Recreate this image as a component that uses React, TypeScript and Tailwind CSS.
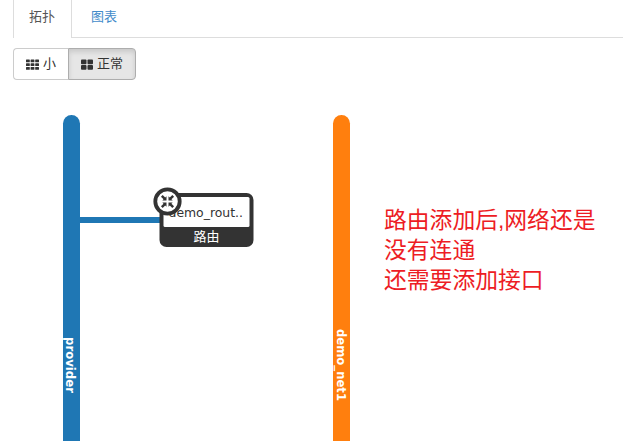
function SmallGrid() {
  return (
    <svg className="h-[11px] w-[13px] shrink-0" viewBox="0 0 13 11" fill="#333">
      {[0, 4.6, 9.2].map((x) =>
        [0.5, 4.2, 7.9].map((y) => <rect key={`${x}-${y}`} x={x} y={y} width="3.8" height="2.8" rx="0.5" />)
      )}
    </svg>
  );
}

function LargeGrid() {
  return (
    <svg className="h-[11px] w-[12px] shrink-0" viewBox="0 0 12 11" fill="#333">
      {[0, 6.5].map((x) =>
        [0.5, 6].map((y) => <rect key={`${x}-${y}`} x={x} y={y} width="5.5" height="4.7" rx="0.9" />)
      )}
    </svg>
  );
}

function Tabs() {
  return (
    <nav className="flex h-[38px] pl-[13px] text-[13px] leading-[34px]">
      <div className="w-[59px] border-x border-[#ddd] pl-[15px] text-[#555]">拓扑</div>
      <div className="flex-1 border-b border-[#ddd] pl-[19px] text-[#428bca]">图表</div>
    </nav>
  );
}

function SizeToggle() {
  return (
    <div className="mt-[10px] ml-[13px] flex h-8 w-[123px] text-[13px] text-[#333]">
      <button className="flex w-[55px] items-center gap-1 rounded-l-[4px] border border-r-0 border-[#ccc] bg-white pl-3">
        <SmallGrid />
        <span>小</span>
      </button>
      <button className="flex w-[68px] items-center gap-1 rounded-r-[4px] border border-[#adadad] bg-[#e6e6e6] pl-3 shadow-[inset_0_3px_5px_rgba(0,0,0,0.125)]">
        <LargeGrid />
        <span>正常</span>
      </button>
    </div>
  );
}

function Topology() {
  return (
    <svg className="absolute inset-0" width="623" height="441" viewBox="0 0 623 441">
      <rect x="63" y="115" width="17" height="360" rx="8.5" fill="#1f77b4" />
      <rect x="333" y="115" width="17" height="360" rx="8.5" fill="#ff7f0e" />
      <rect x="80" y="217" width="82" height="6" fill="#1f77b4" />
      <g fill="#fff" fontWeight="700" fontSize="12.5" className="font-['DejaVu_Sans',sans-serif]">
        <text transform="translate(66 337) rotate(90)" textLength="56" lengthAdjust="spacingAndGlyphs">provider</text>
        <text transform="translate(337 329) rotate(90)" textLength="72" lengthAdjust="spacingAndGlyphs">demo_net1</text>
      </g>
      <rect x="159.5" y="193" width="94" height="54" rx="7" fill="#333" />
      <rect x="163.5" y="197" width="86" height="30" rx="1.5" fill="#fff" />
      <text x="168.5" y="217" fontSize="12" fill="#333" textLength="74.5" lengthAdjust="spacingAndGlyphs" className="font-['DejaVu_Sans',sans-serif]">demo_rout..</text>
      <text x="193.5" y="241" fontSize="13" fill="#fff" className="font-['Noto_Sans_CJK_SC',sans-serif]">路由</text>
      <circle cx="167.5" cy="201.5" r="12.2" fill="#fff" stroke="#333" strokeWidth="3.8" />
      <g transform="translate(167.5 201.5)">
        {[0, 90, 180, 270].map((angle) => (
          <g key={angle} transform={`rotate(${angle})`}>
            <path d="M1 1H5.2L1 5.2Z" fill="#333" />
            <path d="M2.6 2.6L5.7 5.7" stroke="#333" strokeWidth="2.4" />
          </g>
        ))}
      </g>
    </svg>
  );
}

export default function App() {
  return (
    <main className="relative h-[441px] w-[623px] overflow-hidden bg-white font-['Liberation_Sans','Noto_Sans_CJK_SC',sans-serif]">
      <Tabs />
      <SizeToggle />
      <Topology />
      <p className="absolute top-[206px] left-[384px] text-[22.8px] leading-[29.8px] whitespace-nowrap text-[#ed1c24]">
        路由添加后,网络还是
        <br />
        没有连通
        <br />
        还需要添加接口
      </p>
    </main>
  );
}
